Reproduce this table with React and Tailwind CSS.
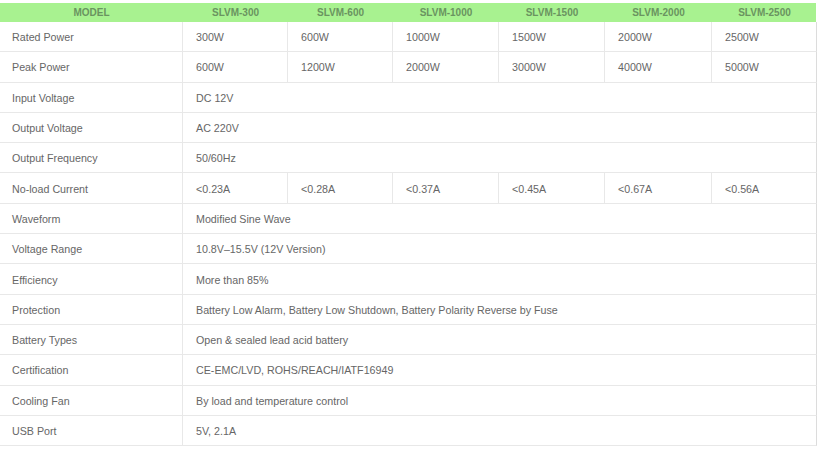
const models = ['SLVM-300', 'SLVM-600', 'SLVM-1000', 'SLVM-1500', 'SLVM-2000', 'SLVM-2500'];

// single string = spans all model columns
const rows = [
    ['Rated Power', ['300W', '600W', '1000W', '1500W', '2000W', '2500W']],
    ['Peak Power', ['600W', '1200W', '2000W', '3000W', '4000W', '5000W']],
    ['Input Voltage', 'DC 12V'],
    ['Output Voltage', 'AC 220V'],
    ['Output Frequency', '50/60Hz'],
    ['No-load Current', ['<0.23A', '<0.28A', '<0.37A', '<0.45A', '<0.67A', '<0.56A']],
    ['Waveform', 'Modified Sine Wave'],
    ['Voltage Range', '10.8V–15.5V (12V Version)'],
    ['Efficiency', 'More than 85%'],
    ['Protection', 'Battery Low Alarm, Battery Low Shutdown, Battery Polarity Reverse by Fuse'],
    ['Battery Types', 'Open & sealed lead acid battery'],
    ['Certification', 'CE-EMC/LVD, ROHS/REACH/IATF16949'],
    ['Cooling Fan', 'By load and temperature control'],
    ['USB Port', '5V, 2.1A'],
];

const cols = 'grid grid-cols-[183px_105px_105px_106px_106px_107px_105px]';
const cell = 'h-[30.3px] flex items-center pt-px pl-3 border-b border-r border-[#e8e8e8] whitespace-nowrap';

export default function App() {
    return (
        <div className="w-[820px] h-[450px] bg-white pt-[3px] font-['Liberation_Sans',Arial,sans-serif] text-[10.7px] text-[#666]">
            {/* Header */}
            <div className={`${cols} w-[816px] h-[19px] bg-[#a8f290] text-[10px] font-bold text-[#6a9460]`}>
                <div className="flex items-center justify-center">MODEL</div>
                {models.map(m => (
                    <div key={m} className="flex items-center justify-center">{m}</div>
                ))}
            </div>

            {/* Body */}
            <div className={`${cols} w-[817px]`}>
                {rows.map(([label, val]) => (
                    <div key={label} className="contents">
                        <div className={cell}>{label}</div>
                        {Array.isArray(val) ? (
                            val.map((v, i) => (
                                <div key={i} className={`${cell} pl-[13px] ${i === 5 ? 'border-r-[#dcdcdc]' : ''}`}>{v}</div>
                            ))
                        ) : (
                            <div className={`${cell} pl-[13px] col-span-6 border-r-[#dcdcdc]`}>{val}</div>
                        )}
                    </div>
                ))}
            </div>
        </div>
    );
}
